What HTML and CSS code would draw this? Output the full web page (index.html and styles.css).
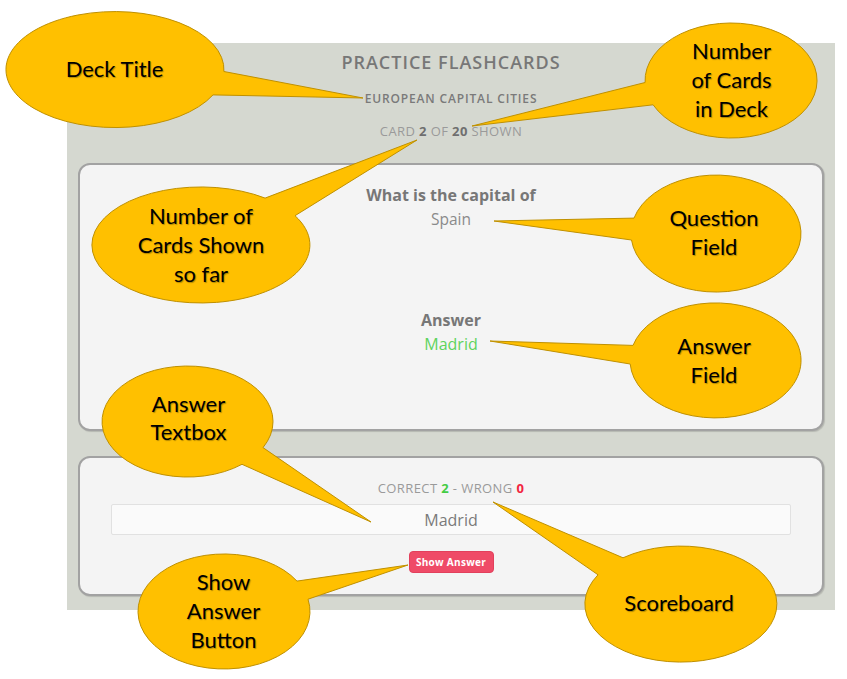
FILE: index.html
```html
<!DOCTYPE html>
<html lang="en">
<head>
<meta charset="utf-8">
<title>Practice Flashcards</title>
<link rel="stylesheet" href="styles.css">
</head>
<body>
<div class="page">
  <main class="panel">
    <h1 class="title">PRACTICE FLASHCARDS</h1>
    <div class="deck">EUROPEAN CAPITAL CITIES</div>
    <div class="count">CARD <b>2</b> OF <b>20</b> SHOWN</div>
    <section class="card card-q">
      <div class="label">What is the capital of</div>
      <div class="value">Spain</div>
      <div class="label answer-label">Answer</div>
      <div class="value answer">Madrid</div>
    </section>
    <section class="card card-a">
      <div class="score">CORRECT <b class="ok">2</b> - WRONG <b class="bad">0</b></div>
      <input class="textbox" type="text" value="Madrid">
      <button class="btn" type="button">Show Answer</button>
    </section>
  </main>

  <svg class="callouts" width="847" height="679" viewBox="0 0 847 679">
    <g class="bubble">
      <path d="M223.9 71.5 L363 98 L213 94.9 A109 58 0 1 1 223.9 71.5 Z"/>
      <path d="M653.1 104.8 L472 126 L645.1 82.5 A86 57.5 0 1 1 653.1 104.8 Z"/>
      <path d="M265.1 198.1 L417 140 L295 215.7 A109 58 0 1 1 265.1 198.1 Z"/>
      <path d="M631.5 240 L494 221 L634 218.1 A85 58.5 0 1 1 631.5 240 Z"/>
      <path d="M630.2 364 L490 341 L633 345.4 A85.5 57.5 0 1 1 630.2 364 Z"/>
      <path d="M263 447.6 L371 522 L242 464.3 A85.5 55.5 0 1 1 263 447.6 Z"/>
      <path d="M297 581.1 L408 565 L308 599.2 A86 57.5 0 1 1 297 581.1 Z"/>
      <path d="M598 574.8 L493 502 L623 557.8 A96 58 0 1 1 598 574.8 Z"/>
    </g>
    <g class="bubble-text">
      <text x="114.5" y="77">Deck Title</text>
      <text x="731.5" y="59">Number</text>
      <text x="731.5" y="88">of Cards</text>
      <text x="731.5" y="117">in Deck</text>
      <text x="201" y="224">Number of</text>
      <text x="201" y="253">Cards Shown</text>
      <text x="201" y="282">so far</text>
      <text x="714" y="226">Question</text>
      <text x="714" y="254.5">Field</text>
      <text x="714" y="354">Answer</text>
      <text x="714" y="383">Field</text>
      <text x="188.5" y="412">Answer</text>
      <text x="188.5" y="440">Textbox</text>
      <text x="223.5" y="590">Show</text>
      <text x="223.5" y="619">Answer</text>
      <text x="223.5" y="648">Button</text>
      <text x="679" y="611">Scoreboard</text>
    </g>
  </svg>
</div>
</body>
</html>
```

FILE: styles.css
```css
* { box-sizing: border-box; }

html, body {
  margin: 0;
  padding: 0;
  background: #ffffff;
}

.page {
  position: relative;
  width: 847px;
  height: 679px;
  padding: 43px 0 0 67px;
  font-family: "Open Sans", "Liberation Sans", sans-serif;
}

.panel {
  width: 768px;
  height: 567px;
  background: #d5d8d0;
  padding: 7px 11px 0;
  display: flex;
  flex-direction: column;
  text-align: center;
}

.title {
  margin: 0;
  font-size: 18px;
  line-height: 24px;
  font-weight: 600;
  color: #777777;
  letter-spacing: 1px;
}

.deck {
  margin-top: 17px;
  font-size: 12px;
  line-height: 16px;
  font-weight: 600;
  color: #7a7a7a;
  letter-spacing: 0.85px;
}

.count {
  margin-top: 16px;
  font-size: 13px;
  line-height: 16px;
  color: #9a9a9a;
  letter-spacing: 0.4px;
}

.count b {
  color: #6f6f6f;
  font-weight: 700;
}

.card {
  background: #f4f4f4;
  border: 2px solid #a2a2a2;
  border-radius: 12px;
  box-shadow: 1px 1px 1px rgba(0, 0, 0, 0.15);
  display: flex;
  flex-direction: column;
  align-items: center;
}

.card-q {
  margin-top: 24px;
  padding: 18px 0 73px;
}

.label {
  font-size: 16px;
  line-height: 24px;
  font-weight: 700;
  color: #777777;
}

.value {
  font-size: 15.5px;
  line-height: 24px;
  color: #8a8a8a;
}

.answer-label { margin-top: 77px; }

.value.answer {
  color: #5ed35e;
  font-size: 16px;
}

.card-a {
  margin-top: 25px;
  padding: 22px 0 21px;
}

.score {
  font-size: 13px;
  line-height: 16px;
  color: #9a9a9a;
  letter-spacing: 0.4px;
}

.score .ok { color: #44cc44; }
.score .bad { color: #f2243f; }

.textbox {
  display: block;
  margin-top: 8px;
  width: calc(100% - 62px);
  height: 31px;
  border: 1px solid #e1e1e1;
  border-radius: 2px;
  background: #fafafa;
  padding: 0;
  text-align: center;
  font-family: "Open Sans", "Liberation Sans", sans-serif;
  font-size: 16px;
  color: #7a7a7a;
  outline: none;
}

.btn {
  margin-top: 16px;
  width: 85px;
  height: 22px;
  padding: 0;
  border: 1px solid #e2405c;
  border-radius: 4px;
  background: #ef4b67;
  color: #ffffff;
  font-family: "Open Sans", "Liberation Sans", sans-serif;
  font-size: 10px;
  font-weight: 700;
  letter-spacing: 0.3px;
  line-height: 20px;
}

.callouts {
  position: absolute;
  left: 0;
  top: 0;
  pointer-events: none;
}

.bubble path {
  fill: #ffc000;
  stroke: #bf9000;
  stroke-width: 1;
}

.bubble-text text {
  font-family: Lato, "Open Sans", sans-serif;
  font-size: 22px;
  fill: #000000;
  text-anchor: middle;
  text-shadow: 1px 1px 1px rgba(0, 0, 0, 0.3);
}
```
